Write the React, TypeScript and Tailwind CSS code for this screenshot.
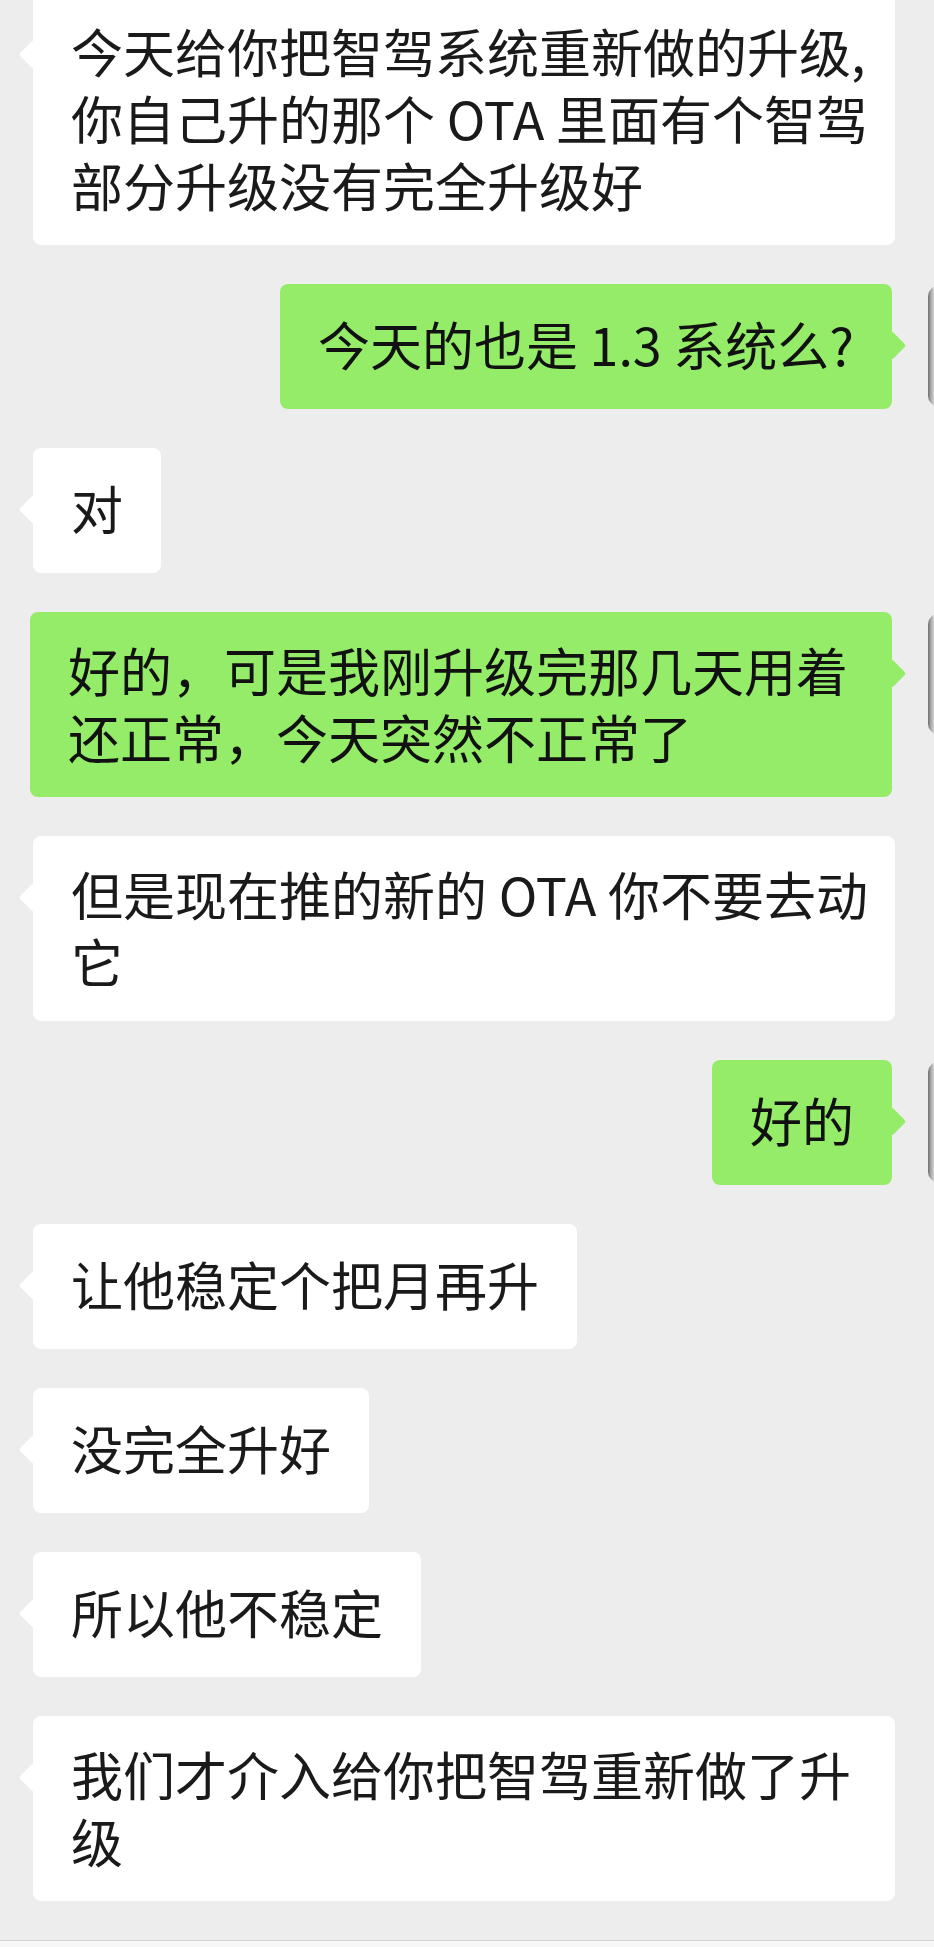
type Msg = { side: "left" | "right"; lines: string[] };

const messages: Msg[] = [
  {
    side: "left",
    lines: ["今天给你把智驾系统重新做的升级,", "你自己升的那个 OTA 里面有个智驾", "部分升级没有完全升级好"],
  },
  { side: "right", lines: ["今天的也是 1.3 系统么?"] },
  { side: "left", lines: ["对"] },
  { side: "right", lines: ["好的，可是我刚升级完那几天用着", "还正常，今天突然不正常了"] },
  { side: "left", lines: ["但是现在推的新的 OTA 你不要去动", "它"] },
  { side: "right", lines: ["好的"] },
  { side: "left", lines: ["让他稳定个把月再升"] },
  { side: "left", lines: ["没完全升好"] },
  { side: "left", lines: ["所以他不稳定"] },
  { side: "left", lines: ["我们才介入给你把智驾重新做了升", "级"] },
];

function Bubble({ msg }: { msg: Msg }) {
  const mine = msg.side === "right";
  const multi = msg.lines.length > 1;
  return (
    <div
      className={`relative max-w-[862px] rounded-[8px] px-[38px] ${multi ? "w-[862px] pt-[24px] pb-[27px]" : "pt-[26px] pb-[32px]"} ${mine ? "bg-[#95ec69] text-[#111111]" : "bg-white text-[#1a1a1a]"}`}
    >
      {/* little arrow pointing to the avatar */}
      <span
        className={`absolute top-[51px] w-[21px] h-[21px] rotate-45 rounded-[3px] ${mine ? "right-[-10px] bg-[#95ec69]" : "left-[-10px] bg-white"}`}
      />
      {msg.lines.map((line, i) => (
        <div key={i} className="relative whitespace-nowrap">
          {line}
        </div>
      ))}
    </div>
  );
}

export default function App() {
  return (
    <div className="min-h-screen overflow-hidden bg-[#ededed] font-['Noto_Sans_CJK_SC','Noto_Sans',sans-serif] text-[52px] leading-[67px]">
      <div className="flex flex-col gap-[39px] -mt-[7px] pb-[39px]">
        {messages.map((m, i) =>
          m.side === "left" ? (
            <div key={i} className="flex pl-[33px]">
              <Bubble msg={m} />
            </div>
          ) : (
            <div key={i} className="flex items-start justify-end gap-[36px] pl-[30px] mr-[-114px]">
              <Bubble msg={m} />
              <div className="mt-[2px] h-[120px] w-[120px] shrink-0 rounded-[10px] bg-[linear-gradient(90deg,#6e6e6e_0px,#a9a9a9_3px,#d4d4d4_6px,#e4e4e4_24px)]" />
            </div>
          )
        )}
      </div>
      <div className="h-[20px] border-t border-[#d4d4d4] bg-[#f7f7f7]" />
    </div>
  );
}
